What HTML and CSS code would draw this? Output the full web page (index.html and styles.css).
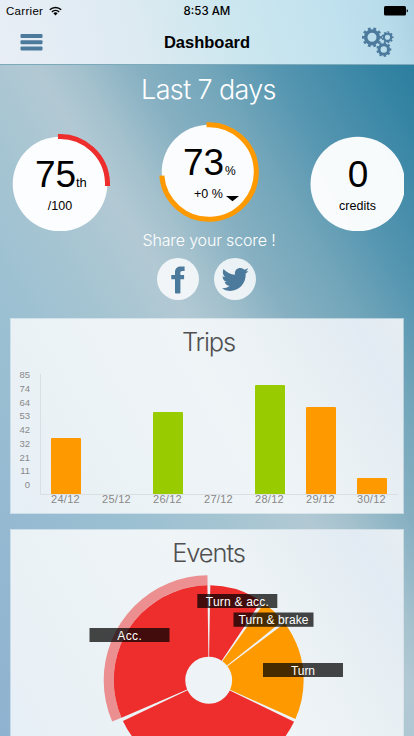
FILE: index.html
```html
<!DOCTYPE html>
<html lang="en">
<head>
<meta charset="utf-8">
<title>Dashboard</title>
<link rel="stylesheet" href="styles.css">
</head>
<body>
<header class="top">
  <div class="status">
    <div class="carrier"><span>Carrier</span>
      <svg width="13" height="10" viewBox="0 0 13 10"><g fill="none" stroke="#000" stroke-width="1.5"><path d="M.8 3.7a8.2 8.2 0 0 1 11.4 0"/><path d="M2.9 5.9a5.2 5.2 0 0 1 7.2 0"/></g><path d="M4.4 7.3a3 3 0 0 1 4.2 0L6.5 9.5z"/></svg>
    </div>
    <strong class="clock">8:53 AM</strong>
    <svg class="battery" width="24" height="10" viewBox="0 0 24 10"><rect width="22" height="9.5" rx="1.5"/><path d="M22.7 3.2q1.3.2 1.3 1.6t-1.3 1.6z"/></svg>
  </div>
  <nav class="bar">
    <svg width="23" height="17" viewBox="0 0 23 17" fill="#4c7a9d"><rect x=".5" width="22" height="4" rx="1"/><rect x=".5" y="6.200" width="22" height="4" rx="1"/><rect x=".5" y="12.400" width="22" height="4" rx="1"/></svg>
    <h1>Dashboard</h1>
    <svg class="gears" width="32" height="30" viewBox="0 0 32 30" fill="none" stroke="#4c7a9d">
      <circle cx="10" cy="10.3" r="6.3" stroke-width="3.6"/>
      <circle cx="10" cy="10.3" r="8.8" stroke-width="2.4" pathLength="100" stroke-dasharray="5 5" stroke-dashoffset="2.5"/>
      <circle cx="25.5" cy="10.3" r="3.7" stroke-width="2.3"/>
      <circle cx="25.5" cy="10.3" r="5.2" stroke-width="1.5" pathLength="90" stroke-dasharray="5 5" stroke-dashoffset="2.5"/>
      <circle cx="21.8" cy="22.5" r="4.7" stroke-width="3"/>
      <circle cx="21.8" cy="22.5" r="6.6" stroke-width="1.8" pathLength="90" stroke-dasharray="5 5" stroke-dashoffset="2.5"/>
    </svg>
  </nav>
</header>
<main>
  <h2 class="period"><span>Last 7 days</span></h2>
  <section class="gauges">
    <svg width="104" height="104" viewBox="0 0 104 104">
      <circle class="disc" cx="52" cy="52" r="47.3"/>
      <circle class="arc red" cx="52" cy="52" r="47.5" pathLength="360" stroke-dasharray="95 265" transform="rotate(-92.5 52 52)"/>
      <text class="big" x="27" y="54.5">75</text><text class="unit" x="68" y="54.5">th</text>
      <text class="note" x="52" y="78" text-anchor="middle">/100</text>
    </svg>
    <svg class="raised" width="104" height="104" viewBox="0 0 104 104">
      <circle class="disc" cx="52" cy="52" r="47.3"/>
      <circle class="arc orange" cx="52" cy="52" r="47.3" pathLength="360" stroke-dasharray="268.5 91.5" transform="rotate(-93 52 52)"/>
      <text class="big" x="26" y="54.5">73</text><text class="unit small" x="68" y="54.5">%</text>
      <text class="note" x="37" y="78">+0 %</text>
      <path d="M69 76h13l-6.5 5.3z"/>
    </svg>
    <svg width="104" height="104" viewBox="0 0 104 104">
      <circle class="disc" cx="51.8" cy="52" r="47.3"/>
      <text class="big" x="52" y="54.5" text-anchor="middle">0</text>
      <text class="note" x="51.5" y="78" text-anchor="middle">credits</text>
    </svg>
  </section>
  <p class="share">Share your score !</p>
  <div class="social">
    <span class="badge"><svg width="42" height="42" viewBox="0 0 42 42"><path fill="#4c7a9d" d="M18 35.2V21.3h-3.700v-4.200H18v-2.800c0-4 2.300-5.800 6-5.800h3.600v4.400h-2.200c-1.600 0-2 .7-2 1.900v2.300h3.700v4.200h-3.700v13.900q-2.700.8-5.400 0z"/></svg></span>
    <span class="badge"><svg width="42" height="42" viewBox="0 0 42 42"><path fill="#4c7a9d" d="M34.3 12.9q-1 1.700-2.600 2.700c.5 10-6.700 17.300-15.700 17.300q-5 0-8-2.600 4.500.2 7.600-2.300-3.800-.6-5-3.900h2.300q-4.300-1.500-4.400-5.900 1.200.8 2.500.7-3.500-3.200-1.500-7.900 4.700 5.300 11.500 5.700c-.8-4 2-6.700 5.500-6.700q2.400 0 4 1.800l3.600-1.500q-.6 2-2.300 3.200z"/></svg></span>
  </div>
  <section class="card trips">
    <h2>Trips</h2>
    <div class="chart">
      <div class="scale"><span>85</span><span>74</span><span>64</span><span>53</span><span>42</span><span>32</span><span>21</span><span>11</span><span>0</span></div>
      <div class="plot">
        <div class="bars">
          <i class="orange" style="height:56.500px"></i><i></i><i class="green" style="height:82.500px"></i><i></i><i class="green" style="height:109.500px"></i><i class="orange" style="height:87.500px"></i><i class="orange" style="height:16.500px"></i>
        </div>
        <div class="days"><span>24/12</span><span>25/12</span><span>26/12</span><span>27/12</span><span>28/12</span><span>29/12</span><span>30/12</span></div>
      </div>
    </div>
  </section>
  <section class="card events">
    <h2>Events</h2>
    <svg class="pie" width="392" height="166" viewBox="11 570 392 166">
      <g fill="none" stroke-width="71.500" transform="rotate(-90 208.700 680.300)">
        <circle cx="208.700" cy="680.300" r="100" stroke="#ec2c2c" stroke-opacity=".5" style="stroke-width:10px" pathLength="360" stroke-dasharray="112.500 247.500" stroke-dashoffset="-246.800"/>
        <circle cx="208.700" cy="680.300" r="59.200" stroke="#ee2d2d" pathLength="360" stroke-dasharray="112.500 247.500" stroke-dashoffset="-246.700"/>
        <circle cx="208.700" cy="680.300" r="59.200" stroke="#ee2d2d" pathLength="360" stroke-dasharray="32.600 327.400" stroke-dashoffset="-1"/>
        <circle cx="208.700" cy="680.300" r="59.200" stroke="#ff9900" pathLength="360" stroke-dasharray="15.500 344.500" stroke-dashoffset="-35.700"/>
        <circle cx="208.700" cy="680.300" r="59.200" stroke="#ff9900" pathLength="360" stroke-dasharray="61 299" stroke-dashoffset="-53.100"/>
        <circle cx="208.700" cy="680.300" r="59.200" stroke="#ee2d2d" pathLength="360" stroke-dasharray="128.600 231.400" stroke-dashoffset="-116"/>
      </g>
      <g fill-opacity=".72"><rect x="89.500" y="628" width="80" height="14"/><rect x="197.300" y="594" width="80" height="14"/><rect x="233.500" y="612.500" width="80" height="14.300"/><rect x="263" y="663" width="80" height="14"/></g>
      <g class="tag"><text x="129.500" y="640" textLength="24.500">Acc.</text><text x="237.300" y="606" textLength="63">Turn &amp; acc.</text><text x="273.500" y="624.300" textLength="70">Turn &amp; brake</text><text x="303" y="675" textLength="24">Turn</text></g>
    </svg>
  </section>
</main>
</body>
</html>
```
FILE: styles.css
```css
* { box-sizing: border-box; }
html, body { height: 100%; }
body {
  margin: 0;
  overflow: hidden;
  font-family: "Liberation Sans", Arial, sans-serif;
  color: #000;
  background: linear-gradient(59deg, #8fb2d0 0, #9bc0d2 30%, #a7c5d2 43%, #b2c9d4 51%, #a4c1cd 56%, #86b0c2 63%, #73a6ba 71%, #5696b1 79%, #3584a4 91%, #23789a 100%);
}
h1, h2, p { margin: 0; }
svg { display: block; }

.top {
  height: 65px;
  border-bottom: 1px solid #7caabb;
  background: linear-gradient(75deg, #e9eef6 0, #dceaf1 35%, #cde7ef 55%, #c3e3ef 75%, #b9dceb 92%, #aad1e2 100%);
}
.status {
  display: grid;
  grid-template-columns: 1fr auto 1fr;
  align-items: center;
  height: 22px;
  padding: 0 6px;
  font-size: 11.5px;
}
.carrier { display: flex; align-items: center; gap: 6px; letter-spacing: .3px; }
.clock { font: 500 11.500px/14px Inter, sans-serif; }
.battery { justify-self: end; }
.bar {
  display: grid;
  grid-template-columns: 1fr auto 1fr;
  align-items: center;
  height: 40px;
  padding: 0 20px;
}
.bar h1 { font-size: 16.500px; line-height: 20px; }
.gears { justify-self: end; margin-top: -1px; }

.period {
  height: 57px;
  padding-top: 8px;
  padding-left: 3px;
  text-align: center;
  font: 300 27px/34px Inter, sans-serif;
  letter-spacing: -.65px;
  color: #fff;
}
.gauges {
  display: flex;
  justify-content: space-between;
  width: 396px;
  height: 109px;
  margin-left: 8px;
  padding-top: 10px;
  overflow: hidden;
}
.gauges svg { flex: none; overflow: visible; }
.raised { margin-top: -12px; }
.gauges svg:last-child { margin-right: -6px; }
.disc { fill: #fff; fill-opacity: .96; }
.arc { fill: none; stroke-width: 5px; }
.arc.red { stroke: #ee2d2d; }
.arc.orange { stroke: #ff9900; }
.big { font-size: 37px; }
.unit { font-size: 13px; }
.unit.small { font-size: 12px; }
.note { font-size: 12.500px; }
.share {
  height: 27px;
  padding-left: 4px;
  text-align: center;
  font: 300 16px/18px Inter, sans-serif;
  letter-spacing: -.15px;
  color: #fff;
}
.social { display: flex; justify-content: center; gap: 15px; height: 60px; padding-right: 1px; }
.badge { width: 42px; height: 42px; border-radius: 50%; background: rgba(255,255,255,.82); }
.badge svg { filter: blur(.4px); }

.card {
  width: 394px;
  margin-left: 10px;
  border: 1px solid rgba(255,255,255,.5);
  background: linear-gradient(60deg, #e7eff7 0, #ebf2f5 25%, #eff4f7 55%, #e9f0f4 75%, #e2ebf3 90%, #e6eef2 100%);
  background-clip: padding-box;
}
.card h2 {
  padding-left: 3px;
  text-align: center;
  font: 300 25.500px/34px Inter, sans-serif;
  letter-spacing: -1.1px;
  color: #505050;
}
.trips { height: 196px; padding-top: 6px; }
.events { height: 207px; margin-top: 15px; padding-top: 6px; border-bottom: 0; }
.chart { display: flex; margin-top: 15px; }
.scale {
  display: flex;
  flex-direction: column;
  align-items: flex-end;
  width: 19px;
  margin-top: -6px;
  margin-right: 10px;
  font-size: 9.500px;
  line-height: 13.750px;
  color: #888;
}
.plot { width: 358px; }
.bars, .days { display: grid; grid-template-columns: repeat(7, 30px); column-gap: 21px; padding-left: 10px; }
.bars {
  align-items: end;
  height: 121px;
  border-left: 1px solid #dcdfe1;
  border-bottom: 1px solid #dcdfe1;
}
.bars i { border-radius: 1px 1px 0 0; }
.bars .orange { background: #ff9900; }
.bars .green { background: #99cc00; }
.days { margin-top: -2px; padding-left: 11px; font-size: 11px; line-height: 12px; letter-spacing: .3px; color: #888; white-space: nowrap; }
.tag { font-size: 12px; fill: #fff; text-anchor: middle; }
```
